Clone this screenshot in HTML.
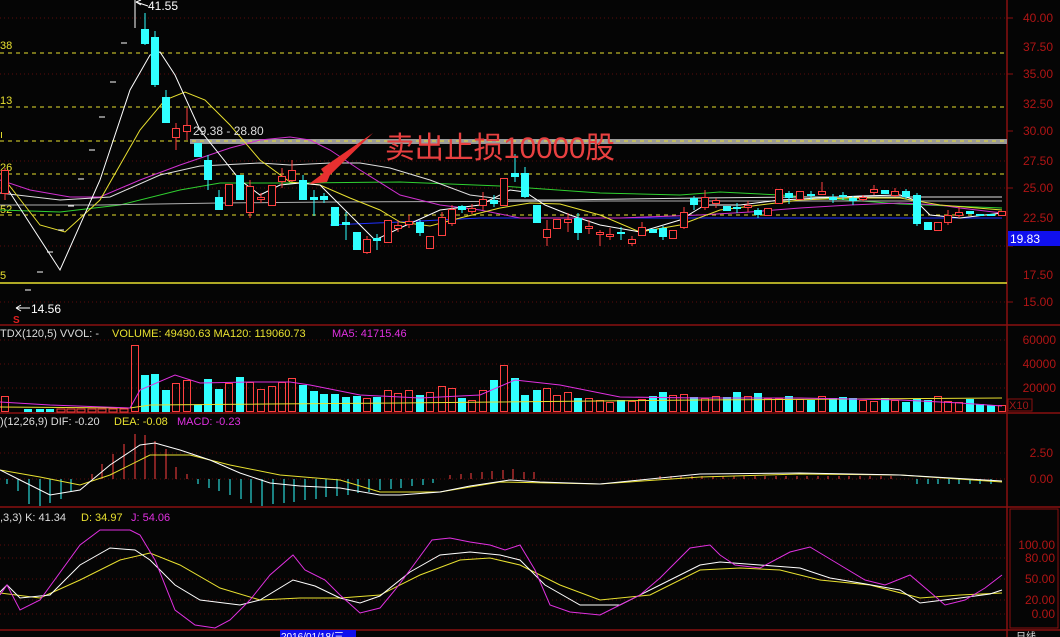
<!DOCTYPE html>
<html><head><meta charset="utf-8">
<style>
html,body{margin:0;padding:0;background:#000;overflow:hidden}
svg{display:block}
text{font-family:"Liberation Sans","Noto Sans CJK SC",sans-serif}
</style></head>
<body>
<svg id="s" width="1060" height="637" viewBox="0 0 1060 637" xmlns="http://www.w3.org/2000/svg">
<rect width="1060" height="637" fill="#050505"/>
<g id="grid" stroke="#5a0c0c" stroke-dasharray="1,3" stroke-width="1">
<line x1="0" y1="18" x2="1007" y2="18"/><line x1="0" y1="74" x2="1007" y2="74"/>
<line x1="0" y1="161" x2="1007" y2="161"/><line x1="0" y1="188" x2="1007" y2="188"/>
<line x1="0" y1="246" x2="1007" y2="246"/><line x1="0" y1="302" x2="1007" y2="302"/>
<line x1="0" y1="340" x2="1007" y2="340"/><line x1="0" y1="364" x2="1007" y2="364"/><line x1="0" y1="388" x2="1007" y2="388"/>
<line x1="0" y1="453" x2="1007" y2="453"/><line x1="0" y1="479" x2="1007" y2="479"/>
<line x1="0" y1="545" x2="1007" y2="545"/><line x1="0" y1="558" x2="1007" y2="558"/><line x1="0" y1="579" x2="1007" y2="579"/><line x1="0" y1="600" x2="1007" y2="600"/><line x1="0" y1="614" x2="1007" y2="614"/>
</g>
<g stroke="#8a1010" stroke-width="1.5">
<line x1="0" y1="325" x2="1060" y2="325"/><line x1="0" y1="413" x2="1060" y2="413"/>
<line x1="0" y1="507" x2="1060" y2="507"/><line x1="0" y1="630" x2="1060" y2="630"/>
<line x1="1007" y1="0" x2="1007" y2="637"/>
</g>
<rect x="1010" y="509" width="48" height="119" fill="none" stroke="#8a1010"/>
<rect x="190" y="139" width="817" height="5" fill="#9a9a9a"/>
<g stroke="#e8e030" stroke-dasharray="4,4" stroke-width="1">
<line x1="0" y1="53" x2="1007" y2="53"/><line x1="0" y1="107" x2="1007" y2="107"/>
<line x1="0" y1="141" x2="1007" y2="141"/><line x1="0" y1="174" x2="1007" y2="174"/>
<line x1="0" y1="215" x2="1007" y2="215"/>
</g>
<line x1="0" y1="283" x2="1007" y2="283" stroke="#e8e030" stroke-width="1.5"/>
<g font-size="11" fill="#e8e030">
<text x="0" y="49">38</text><text x="0" y="104">13</text><text x="0" y="138">ı</text><text x="0" y="171">26</text><text x="0" y="213">52</text><text x="0" y="279">5</text>
</g>
<g id="lines" fill="none" stroke-width="1"></g>
<g id="candles"></g>
<g id="vol"></g>
<g id="macd"></g>
<g id="kdj" fill="none" stroke-width="1"></g>
<text x="148" y="10" font-size="12" fill="#fff">41.55</text>
<polyline points="148,6 136,2" stroke="#fff" fill="none"/><line x1="136" y1="2" x2="141" y2="0" stroke="#fff"/><line x1="136" y1="2" x2="141" y2="5" stroke="#fff"/>
<text x="31" y="313" font-size="12" fill="#fff">14.56</text>
<line x1="16" y1="308" x2="30" y2="308" stroke="#fff"/><line x1="16" y1="308" x2="21" y2="305" stroke="#fff"/><line x1="16" y1="308" x2="21" y2="311" stroke="#fff"/>
<text x="13" y="323" font-size="10" fill="#e02020" font-weight="bold">S</text>
<text x="193" y="135" font-size="12" fill="#ddd">29.38 - 28.80</text>
<text x="385" y="158" font-size="30" fill="#e84040" textLength="230" lengthAdjust="spacingAndGlyphs">卖出止损10000股</text>
<path d="M373,133 L321,169 L327,178 Z" fill="#e83030"/>
<path d="M309,184 L334,165 L327,182 Z" fill="#e83030"/>
<g font-size="11">
<text x="0" y="337" fill="#ddd">TDX(120,5) VVOL: -</text>
<text x="112" y="337" fill="#e8e030">VOLUME: 49490.63 MA120: 119060.73</text>
<text x="332" y="337" fill="#e030e0">MA5: 41715.46</text>
<text x="0" y="425" fill="#ddd">)(12,26,9) DIF: -0.20</text>
<text x="114" y="425" fill="#e8e030">DEA: -0.08</text>
<text x="177" y="425" fill="#e030e0">MACD: -0.23</text>
<text x="0" y="521" fill="#ddd">,3,3) K: 41.34</text>
<text x="81" y="521" fill="#e8e030">D: 34.97</text>
<text x="131" y="521" fill="#e030e0">J: 54.06</text>
</g>
<g font-size="12" fill="#b01515" text-anchor="end">
<text x="1053" y="22">40.00</text><text x="1053" y="51">37.50</text><text x="1053" y="78">35.00</text>
<text x="1053" y="108">32.50</text><text x="1053" y="135">30.00</text><text x="1053" y="165">27.50</text>
<text x="1053" y="192">25.00</text><text x="1053" y="222">22.50</text><text x="1053" y="279">17.50</text>
<text x="1053" y="306">15.00</text>
<text x="1056" y="344">60000</text><text x="1056" y="368">40000</text><text x="1056" y="392">20000</text>
<text x="1053" y="457">2.50</text><text x="1053" y="483">0.00</text>
<text x="1055" y="549">100.00</text><text x="1055" y="562">80.00</text><text x="1055" y="583">50.00</text>
<text x="1055" y="604">20.00</text><text x="1055" y="618">0.00</text>
</g>
<g stroke="#8a1010"><line x1="1007" y1="18" x2="1013" y2="18"/><line x1="1007" y1="74" x2="1013" y2="74"/><line x1="1007" y1="131" x2="1013" y2="131"/><line x1="1007" y1="188" x2="1013" y2="188"/><line x1="1007" y1="246" x2="1013" y2="246"/><line x1="1007" y1="302" x2="1013" y2="302"/></g>
<rect x="1008" y="231" width="52" height="15" fill="#1010ee"/>
<text x="1010" y="243" font-size="12" fill="#fff">19.83</text>
<rect x="1008" y="399" width="24" height="12" fill="none" stroke="#8a1010"/>
<text x="1009" y="409" font-size="11" fill="#a01818">X10</text>
<rect x="280" y="630" width="76" height="7" fill="#1010ee"/>
<text x="281" y="640" font-size="10" fill="#fff">2016/01/18/三</text>
<text x="1016" y="640" font-size="10" fill="#ddd">日线</text>
</svg>
<script>
var NS="http://www.w3.org/2000/svg";
function el(p,t,a){var e=document.createElementNS(NS,t);for(var k in a)e.setAttribute(k,a[k]);p.appendChild(e);return e;}
function pl(p,pts,c){el(p,"polyline",{points:pts.map(function(q){return q.join(",")}).join(" "),stroke:c,fill:"none","stroke-width":1});}
var L=document.getElementById("lines");
pl(L,[[0,210],[60,212],[120,205],[180,190],[220,183],[300,183],[400,182],[500,186],[600,193],[680,195],[720,192],[780,195],[850,200],[900,204],[1002,208]],"#30d030");
pl(L,[[0,205],[100,205],[220,203],[330,202],[600,201],[1002,201]],"#b0b0b0");
pl(L,[[0,193],[60,200],[110,197],[160,175],[200,166],[260,163],[290,165],[330,163],[360,163],[390,168],[430,180],[470,195],[510,200],[560,200],[700,198],[800,197],[1002,197]],"#e0e0e0");
pl(L,[[330,225],[400,222],[480,218],[560,218],[700,218],[1002,218]],"#2030ff");
pl(L,[[0,180],[30,190],[70,197],[100,197],[140,180],[180,165],[230,148],[260,140],[290,137],[310,140],[330,150],[360,170],[400,195],[440,205],[480,210],[520,218],[570,218],[620,218],[700,215],[750,212],[800,208],[850,205],[900,203],[940,205],[960,208],[1002,213]],"#d030d0");
pl(L,[[5,180],[40,225],[65,232],[100,200],[140,130],[165,100],[185,92],[205,100],[230,125],[260,160],[290,182],[320,185],[350,198],[380,210],[400,222],[430,226],[460,218],[500,208],[530,203],[560,204],[600,215],[640,232],[680,225],[720,210],[760,205],[800,200],[850,198],[900,198],[940,205],[1002,210]],"#e8e030");
pl(L,[[5,185],[60,270],[100,180],[130,90],[150,55],[160,52],[175,75],[200,130],[240,180],[260,195],[280,185],[300,183],[320,185],[345,210],[375,240],[400,228],[440,210],[480,205],[510,190],[525,192],[545,205],[570,215],[600,225],[640,232],[680,220],[705,205],[740,205],[780,200],[820,198],[860,196],[900,195],[915,200],[930,215],[960,218],[1002,213]],"#ffffff");
var C=[[5,'r',170,193,168,200],
[145,'c',29,44,13,45],[155,'c',37,85,31,87],[166,'c',97,123,90,123],[176,'r',128,137,123,150],[187,'r',125,131,108,140],[198,'c',143,157,143,157],[208,'c',160,180,155,190],[219,'c',197,210,190,210],[229,'r',184,205,184,205],[240,'c',175,200,178,200],[250,'r',186,212,180,218],[261,'r',197,199,193,203],[272,'r',185,205,185,205],[282,'r',176,181,168,188],[292,'r',170,180,160,182],[303,'c',180,200,175,200],[314,'c',197,200,190,216],[324,'c',196,200,193,203],[335,'c',207,226,207,226],[346,'c',222,225,212,240],[357,'c',232,250,232,250],[367,'r',239,252,236,254],[377,'c',238,241,234,250],[388,'r',220,242,220,242],[398,'r',225,228,220,232],[409,'r',221,224,215,228],[420,'c',222,233,220,236],[430,'r',236,248,236,248],[442,'r',217,235,212,235],[452,'r',209,223,205,226],[462,'c',206,210,205,213],[472,'r',208,211,204,214],[483,'r',199,205,192,210],[494,'c',200,204,195,207],[504,'r',178,205,178,205],[515,'c',173,177,154,182],[525,'c',173,197,167,198],[537,'c',205,223,205,223],[547,'r',229,237,220,246],[557,'r',219,228,219,228],[568,'r',219,222,213,232],[578,'c',218,233,213,240],[589,'r',226,228,220,234],[600,'r',232,234,230,246],[610,'r',234,236,228,240],[621,'c',232,234,227,240],[632,'r',239,243,236,246],[642,'r',227,235,222,236],[653,'c',229,233,229,233],[663,'c',228,237,226,240],[673,'r',230,238,230,238],[684,'r',212,227,207,229],[694,'c',198,205,196,210],[705,'r',197,207,190,210],[716,'r',200,203,198,208],[727,'c',206,211,206,211],[737,'c',207,209,203,213],[748,'r',205,207,201,212],[758,'c',210,215,208,218],[768,'r',208,215,208,215],[779,'r',189,203,189,203],[789,'c',193,198,191,204],[800,'r',191,199,191,199],[811,'c',194,196,191,200],[822,'r',191,194,182,195],[833,'c',197,200,194,203],[843,'c',195,197,192,200],[853,'c',198,201,196,205],[863,'r',197,199,195,201],[874,'r',189,192,185,195],[885,'c',190,194,190,194],[895,'r',191,195,188,197],[906,'c',191,197,189,199],[917,'c',195,224,193,226],[928,'c',222,230,222,230],[938,'r',222,230,222,230],[948,'r',215,222,210,225],[959,'r',212,215,207,218],[970,'c',211,214,211,214],[980,'c',214,216,214,216],[991,'c',214,216,214,216],[1002,'r',211,215,211,215]];
var V=[396,375,374,390,383,380,405,379,389,383,377,382,389,386,382,378,385,391,394,394,397,396,398,397,390,393,390,395,392,386,388,398,400,390,380,365,378,395,390,388,395,392,398,398,400,402,400,401,399,396,392,395,394,397,398,396,397,392,396,393,398,398,396,399,400,396,398,397,398,400,401,398,400,402,399,400,396,401,402,399,404,405,405,405,404,404,404,405];
var G=document.getElementById("candles"),VG=document.getElementById("vol");
var RED="#ff4040",CY="#30ffff";
[[28,290],[40,272],[50,252],[61,230],[71,206],[81,179],[92,150],[102,117],[113,82],[124,43]].forEach(function(d){el(G,"line",{x1:d[0]-3,x2:d[0]+3,y1:d[1],y2:d[1],stroke:"#fff"});el(VG,"rect",{x:d[0]-4,y:409,width:8,height:3,fill:(d[1]>250?"#30ffff":"none"),stroke:(d[1]>250?"none":RED)});});
el(G,"line",{x1:135,x2:135,y1:0,y2:28,stroke:"#fff"});
el(VG,"rect",{x:131.5,y:345.5,width:7,height:66,fill:"none",stroke:RED});
C.forEach(function(c,i){var x=c[0],col=c[1]=='r'?RED:CY;
 el(G,"line",{x1:x,x2:x,y1:c[4],y2:c[5],stroke:col});
 var h=Math.max(c[3]-c[2],1.5);
 if(c[1]=='r')el(G,"rect",{x:x-3.5,y:c[2]+.5,width:7,height:h,fill:"#050505",stroke:col});
 else el(G,"rect",{x:x-4,y:c[2],width:8,height:h,fill:col});
 var vt=V[i]||402;
 if(c[1]=='r')el(VG,"rect",{x:x-3.5,y:vt+.5,width:7,height:411-vt,fill:"none",stroke:col});
 else el(VG,"rect",{x:x-4,y:vt,width:8,height:412-vt,fill:col});
});
pl(VG,[[0,407],[130,408],[150,405],[400,403],[700,400],[1002,398]],"#e8e030");
pl(VG,[[0,402],[50,405],[130,408],[140,390],[175,375],[200,383],[250,382],[290,382],[310,385],[360,395],[420,398],[480,395],[515,380],[560,385],[620,397],[700,398],[800,398],[900,400],[960,403],[1002,406]],"#e030e0");
var M=document.getElementById("macd");
function mh(x,v){el(M,"line",{x1:x,x2:x,y1:479,y2:479-v,stroke:v>0?RED:CY});}
[[7,-5],[18,-12],[29,-25],[40,-27],[50,-24],[61,-20],[71,-12],[92,5],[102,15],[113,25],[124,35],[135,45],[145,44],[155,38],[166,30],[176,12],[187,5]].forEach(function(a){mh(a[0],a[1]);});
for(var i=198;i<=440;i+=10.7){var d=(i<260?-(5+(i-198)*0.35):-(27-(i-260)*0.13));mh(Math.round(i),Math.round(d));}
for(var j=450;j<=540;j+=10.5){mh(Math.round(j),Math.round(4+((j<520)?(j-450)*0.1:3)));}
for(var k=660;k<=900;k+=10.5){mh(Math.round(k),3);}
for(var k2=917;k2<=1000;k2+=10.5){mh(Math.round(k2),-5);}
pl(M,[[0,470],[40,477],[80,485],[110,475],[150,455],[190,455],[230,465],[280,475],[340,480],[380,492],[440,492],[500,482],[600,484],[700,477],[800,474],[900,475],[1002,482]],"#e8e030");
pl(M,[[0,470],[20,480],[50,495],[80,490],[110,465],[140,445],[155,443],[180,450],[210,460],[240,473],[270,483],[300,486],[340,488],[380,495],[400,495],[440,492],[470,486],[510,480],[540,482],[600,484],[700,474],[800,473],[900,475],[1002,481]],"#ffffff");
var K=document.getElementById("kdj");
pl(K,[[0,593],[40,598],[80,580],[120,560],[150,553],[180,565],[220,588],[260,600],[300,598],[340,598],[380,595],[420,575],[460,560],[490,558],[520,565],[560,585],[600,600],[650,595],[700,570],[740,568],[780,570],[820,580],[870,585],[920,598],[960,595],[1002,593]],"#e8e030");
pl(K,[[0,592],[7,585],[20,598],[50,595],[80,565],[110,548],[135,550],[150,560],[175,585],[200,600],[240,605],[260,600],[293,580],[315,586],[340,598],[360,603],[380,596],[410,572],[440,555],[470,552],[500,555],[520,560],[545,585],[580,605],[620,605],[660,585],[700,565],[720,562],[760,565],[800,568],[830,578],[860,583],[900,590],[920,603],[960,598],[990,594],[1002,590]],"#ffffff");
pl(K,[[0,595],[7,585],[20,610],[40,600],[80,545],[100,530],[130,530],[140,535],[155,560],[175,610],[195,625],[215,628],[230,620],[250,600],[270,575],[293,555],[305,570],[325,580],[340,595],[360,613],[380,608],[395,590],[410,570],[432,540],[450,538],[470,542],[490,545],[505,550],[520,545],[535,570],[550,605],[570,612],[600,615],[620,605],[640,595],[660,578],[690,548],[710,545],[720,555],[735,565],[760,568],[790,552],[810,547],[835,562],[865,580],[885,585],[910,575],[930,592],[945,605],[965,600],[985,588],[1002,575]],"#e030e0");
</script>
</body></html>
